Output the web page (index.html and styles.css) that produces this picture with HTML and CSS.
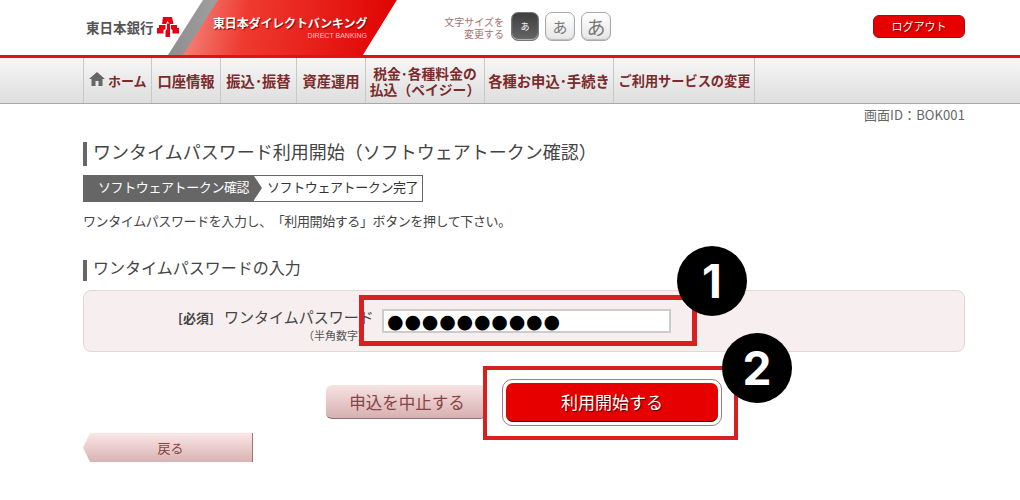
FILE: index.html
```html
<!DOCTYPE html>
<html lang="ja">
<head>
<meta charset="utf-8">
<title>東日本ダイレクトバンキング</title>
<link rel="stylesheet" href="styles.css">
</head>
<body>
<header class="header">
  <div class="bank-name">東日本銀行</div>
  <svg class="bank-logo" viewBox="0 0 22 20" aria-hidden="true">
    <path fill="#e60012" d="M6 0h9l1.500 7H12.500L10.500 4 9 7H5z"/>
    <path fill="#e60012" d="M2 8h6.500v4L6.500 13v3.500H0V11h2z"/>
    <path fill="#e60012" d="M14 8h6v3h2v5.500h-6.500V13L14 12z"/>
    <path fill="#e60012" d="M10 6.500h3V20H8.500v-6L10 12z"/>
  </svg>
  <div class="banner">
    <div class="banner-red">
      <div class="banner-title">東日本ダイレクトバンキング</div>
      <div class="banner-sub">DIRECT BANKING</div>
    </div>
  </div>
  <div class="size-label">文字サイズを<br>変更する</div>
  <div class="size-buttons">
    <button class="size size-s">あ</button>
    <button class="size size-m">あ</button>
    <button class="size size-l">あ</button>
  </div>
  <button class="logout">ログアウト</button>
</header>
<nav class="nav">
  <div class="nav-items">
    <a class="nav-item nav-home"><svg class="home-icon" viewBox="0 0 16 14" aria-hidden="true"><path fill="#666" d="M8 0l8 7h-2.500v7H9.500V9h-3v5H2.500V7H0z"/></svg>ホーム</a>
    <a class="nav-item">口座情報</a>
    <a class="nav-item">振込･振替</a>
    <a class="nav-item">資産運用</a>
    <a class="nav-item nav-two">税金･各種料金の<br>払込（ペイジー）</a>
    <a class="nav-item">各種お申込･手続き</a>
    <a class="nav-item nav-last">ご利用サービスの変更</a>
  </div>
</nav>
<main class="main">
  <div class="screen-id">画面ID：BOK001</div>
  <h1 class="title">ワンタイムパスワード利用開始（ソフトウェアトークン確認）</h1>
  <div class="steps">
    <div class="step step-on">ソフトウェアトークン確認</div>
    <div class="step step-off">ソフトウェアトークン完了</div>
  </div>
  <p class="lead">ワンタイムパスワードを入力し、「利用開始する」ボタンを押して下さい。</p>
  <h2 class="subtitle">ワンタイムパスワードの入力</h2>
  <section class="panel">
    <div class="required">[必須]</div>
    <div class="field-label">
      <div class="field-name">ワンタイムパスワード</div>
      <div class="field-note">（半角数字）</div>
    </div>
    <div class="field-input">●●●●●●●●●●</div>
  </section>
  <div class="actions">
    <button class="cancel">申込を中止する</button>
    <div class="primary-ring"><button class="primary">利用開始する</button></div>
  </div>
  <button class="back">戻る</button>
</main>
<div class="mark-box mark-box-1"></div>
<div class="mark-box mark-box-2"></div>
<div class="badge badge-1">1</div>
<div class="badge badge-2">2</div>
</body>
</html>
```
FILE: styles.css
```css
* { box-sizing: border-box; }
html, body { margin: 0; padding: 0; }
body {
  position: relative;
  width: 1020px;
  height: 500px;
  overflow: hidden;
  background: #fff;
  color: #444;
  font-family: "Noto Sans CJK JP", "Liberation Sans", sans-serif;
  text-spacing-trim: space-all;
}
button { font-family: inherit; padding: 0; cursor: pointer; }

.header {
  display: flex;
  align-items: flex-start;
  height: 55px;
  padding-left: 86px;
}
.bank-name {
  width: 68px;
  margin-top: 18px;
  font-size: 13.500px;
  line-height: 18px;
  font-weight: 700;
  color: #555;
  white-space: nowrap;
}
.bank-logo { width: 22px; height: 20px; margin: 17px 0 0 3px; }
.banner {
  width: 229px;
  height: 55px;
  margin-left: -11px;
  background: linear-gradient(90deg, #8e8e8e, #dcdcdc);
  clip-path: polygon(35px 0, 229px 0, 195px 55px, 0 55px);
}
.banner-red {
  height: 55px;
  margin-left: 15px;
  padding: 14px 0 0 30px;
  background: linear-gradient(100deg, #f58a80 0%, #ee3a30 30%, #e00000 100%);
  clip-path: polygon(35px 0, 214px 0, 180px 55px, 0 55px);
}
.banner-title {
  font-size: 12px;
  line-height: 18px;
  font-weight: 700;
  color: #fff;
  white-space: nowrap;
  letter-spacing: -.15px;
  text-shadow: 1px 1px 1px #8a0000;
}
.banner-sub {
  padding-right: 30px;
  font-family: "Liberation Sans", sans-serif;
  font-size: 7px;
  line-height: 8px;
  text-align: right;
  color: #f7c4c0;
}
.size-label {
  width: 60px;
  margin: 16px 0 0 47px;
  font-size: 10px;
  line-height: 11.500px;
  text-align: right;
  color: #a57272;
  white-space: nowrap;
}
.size-buttons { display: flex; gap: 6px; margin: 12px 0 0 7px; }
.size {
  height: 29px;
  border: 1px solid #a8a8a8;
  border-radius: 7px;
  background: linear-gradient(#fff, #e6e6e6);
  color: #777;
  line-height: 1;
  box-shadow: inset 0 -1px 1px #bbb;
}
.size-s {
  width: 28px;
  font-size: 9px;
  color: #fff;
  background: linear-gradient(#3e3e3e, #666);
  border-color: #777;
}
.size-m { width: 30px; font-size: 15px; }
.size-l { width: 30px; font-size: 19px; }
.logout {
  width: 92px;
  height: 23px;
  margin: 15px 0 0 262px;
  border: 1px solid #a50f14;
  border-radius: 6px;
  background: #e60000;
  color: #fff;
  font-size: 11px;
  line-height: 19px;
  font-weight: 400;
  text-shadow: 1px 1px 1px #700;
}

.nav {
  height: 49px;
  border-top: 3px solid #dc1414;
  border-bottom: 1px solid #a8a8a8;
  background: linear-gradient(#f6f6f6, #dedede);
}
.nav-items {
  display: grid;
  grid-template-columns: 67px 69px 76px 69px 119px 129px 142px;
  height: 45px;
  margin-left: 83px;
  width: 672px;
  border-left: 1px solid #c8c8c8;
  border-right: 1px solid #c8c8c8;
}
.nav-item {
  display: flex;
  align-items: center;
  justify-content: center;
  text-align: center;
  font-size: 14.300px;
  line-height: 17px;
  font-weight: 700;
  color: #7b2b2b;
  white-space: nowrap;
  border-left: 1px solid #c8c8c8;
}
.nav-item:first-child { border-left: 0; }
.nav-home { gap: 3px; justify-content: flex-start; padding-left: 5px; font-size: 13px; }
.nav-two { font-size: 13.800px; line-height: 16px; }
.nav-last { font-size: 13.200px; }
.home-icon { width: 16px; height: 14px; margin-top: -4px; }

.main { width: 882px; margin-left: 83px; }
.screen-id {
  height: 24px;
  font-size: 13px;
  line-height: 22px;
  letter-spacing: .1px;
  text-align: right;
  color: #666;
}
.title {
  margin: 14px 0 0;
  height: 24px;
  padding-left: 6px;
  border-left: 4px solid #666;
  font-size: 18px;
  line-height: 18px;
  font-weight: 400;
  color: #444;
  white-space: nowrap;
}
.steps { display: flex; width: 340px; height: 27px; margin-top: 9px; border: 1px solid #666; }
.step {
  font-size: 13px;
  line-height: 22px;
  letter-spacing: -.4px;
  white-space: nowrap;
}
.step-on {
  position: relative;
  width: 170px;
  padding-left: 14px;
  background: #666;
  color: #fff;
}
.step-on::after {
  content: "";
  position: absolute;
  top: 0;
  right: -8px;
  border-top: 12.500px solid transparent;
  border-bottom: 12.500px solid transparent;
  border-left: 8px solid #666;
}
.step-off { padding-left: 13px; color: #333; }
.lead {
  margin: 10px 0 0;
  height: 18px;
  font-size: 13px;
  line-height: 18px;
  letter-spacing: -.4px;
  color: #444;
  white-space: nowrap;
}
.subtitle {
  margin: 30px 0 0;
  height: 21px;
  padding-left: 6px;
  border-left: 4px solid #666;
  font-size: 16px;
  line-height: 15px;
  font-weight: 400;
  color: #444;
  white-space: nowrap;
}
.panel {
  display: flex;
  align-items: flex-start;
  height: 62px;
  margin-top: 9px;
  padding: 17px 0 0 94px;
  background: #f7eeef;
  border: 1px solid #e7d6d6;
  border-radius: 8px;
}
.required {
  width: 46px;
  font-size: 13px;
  line-height: 19px;
  font-weight: 700;
  color: #444;
}
.field-label { width: 158px; white-space: nowrap; }
.field-name { font-size: 15px; line-height: 17px; color: #444; }
.field-note { font-size: 11px; line-height: 16px; margin-top: 2px; padding-left: 79px; color: #555; }
.field-input {
  width: 289px;
  height: 24px;
  margin-top: 1px;
  padding-left: 3px;
  background: #fff;
  border: 2px solid #ccc;
  color: #000;
  font-family: "DejaVu Sans", sans-serif;
  font-size: 19px;
  line-height: 20px;
  letter-spacing: .8px;
  white-space: nowrap;
  overflow: hidden;
}
.actions {
  display: flex;
  align-items: flex-start;
  justify-content: center;
  gap: 16px;
  margin-top: 27px;
}
.cancel {
  width: 160px;
  height: 34px;
  margin-top: 6px;
  padding-left: 2px;
  border: 0;
  border-bottom: 1px solid #8a7078;
  border-radius: 6px;
  background: linear-gradient(#f7e3e3, #d7b0b0);
  color: #844;
  font-size: 16.500px;
  line-height: 32px;
}
.primary-ring {
  width: 220px;
  height: 47px;
  padding: 3px;
  border: 1px solid #b0747c;
  border-radius: 10px;
  background: #fff;
}
.primary {
  display: block;
  width: 100%;
  height: 39px;
  border: 0;
  border-bottom: 1px solid #300;
  border-radius: 7px;
  background: #e60000;
  color: #fff;
  font-size: 17px;
  line-height: 38px;
  font-weight: 400;
  text-shadow: 1px 1px 1px #500;
}
.back {
  display: block;
  width: 170px;
  height: 29px;
  margin-top: 7px;
  border: 0;
  border-right: 1px solid #b56a6a;
  background: linear-gradient(#fbe6e6, #d9b3b3);
  clip-path: polygon(7px 0, 100% 0, 100% 100%, 7px 100%, 0 50%);
  color: #844;
  font-size: 13px;
  line-height: 28px;
  text-align: center;
  padding-left: 6px;
  padding-right: 0;
}

.mark-box { position: absolute; border: 5px solid #d92020; }
.mark-box-1 { left: 359px; top: 295px; width: 338px; height: 51px; }
.mark-box-2 { left: 483px; top: 366px; width: 255px; height: 74px; border-width: 4px; }
.badge {
  position: absolute;
  width: 70px;
  height: 70px;
  border-radius: 50%;
  background: #000;
  color: #fff;
  font-family: Inter, "Liberation Sans", sans-serif;
  font-size: 46px;
  line-height: 70px;
  font-weight: 700;
  text-align: center;
}
.badge-1 { left: 677px; top: 246px; }
.badge-2 { left: 722px; top: 333px; }
```
